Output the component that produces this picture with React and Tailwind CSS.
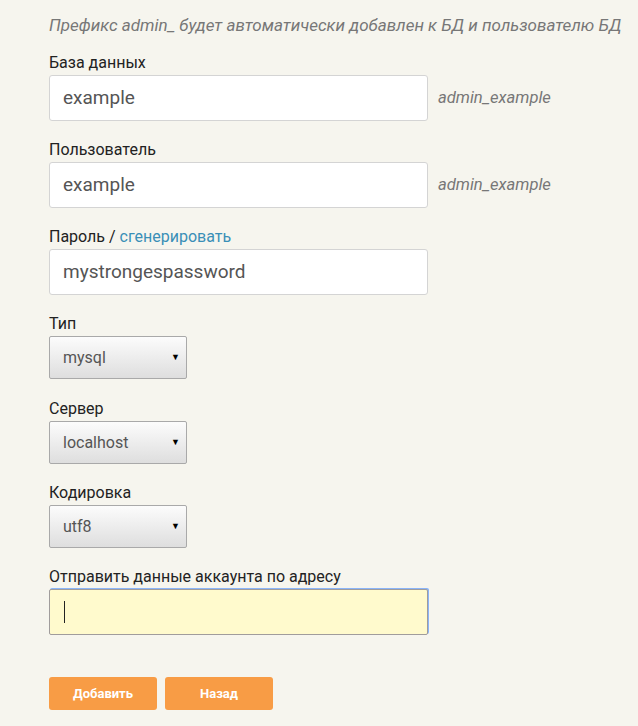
import React from "react";

function Label({ children }) {
  return <div className="text-[16px] leading-[20px] text-[#222] mb-[2px]">{children}</div>;
}

function TextInput({ value, hint }) {
  return (
    <div className="flex items-center">
      <div className="w-[379px] h-[46px] bg-white border border-[#d4d4d4] rounded-[3px] flex items-center pl-[13px] text-[19px] text-[#555]">
        {value}
      </div>
      {hint && <div className="ml-[10px] italic text-[16.6px] text-[#777]">{hint}</div>}
    </div>
  );
}

function Select({ value }) {
  return (
    <div className="w-[138px] h-[43px] border border-[#a9a9a9] rounded-[2px] bg-gradient-to-b from-[#fcfcfc] to-[#dedede] flex items-center justify-between pl-[13px] pr-[6px] text-[16px] text-[#555]">
      <span>{value}</span>
      <span className="text-[9px] text-black">▼</span>
    </div>
  );
}

export default function App() {
  return (
    <div
      className="w-[638px] h-[726px] bg-[#f6f5ee] pl-[49px] overflow-hidden"
      style={{ fontFamily: "Roboto, 'Noto Sans', sans-serif" }}
    >
      <div className="pt-[15px] italic text-[17px] leading-[20px] text-[#777] whitespace-nowrap">
        Префикс admin_ будет автоматически добавлен к БД и пользователю БД
      </div>

      <div className="mt-[18px]">
        <Label>База данных</Label>
        <TextInput value="example" hint="admin_example" />
      </div>

      <div className="mt-[19px]">
        <Label>Пользователь</Label>
        <TextInput value="example" hint="admin_example" />
      </div>

      <div className="mt-[19px]">
        <Label>
          Пароль / <span className="text-[#3a8fb7]">сгенерировать</span>
        </Label>
        <TextInput value="mystrongespassword" />
      </div>

      <div className="mt-[19px]">
        <Label>Тип</Label>
        <Select value="mysql" />
      </div>

      <div className="mt-[20px]">
        <Label>Сервер</Label>
        <Select value="localhost" />
      </div>

      <div className="mt-[19px]">
        <Label>Кодировка</Label>
        <Select value="utf8" />
      </div>

      <div className="mt-[19px]">
        <Label>Отправить данные аккаунта по адресу</Label>
        <div className="w-[379px] h-[46px] bg-[#fffacd] border border-[#a09c9c] rounded-[2px] shadow-[1px_-1px_0_#8ab4f8] flex items-center pl-[14px]">
          <div className="w-[1px] h-[22px] bg-[#222]" />
        </div>
      </div>

      <div className="mt-[42px] flex gap-[8px]">
        <button className="w-[108px] h-[33px] bg-[#f89c45] rounded-[3px] text-white font-bold text-[13px]">
          Добавить
        </button>
        <button className="w-[108px] h-[33px] bg-[#f89c45] rounded-[3px] text-white font-bold text-[13px]">
          Назад
        </button>
      </div>
    </div>
  );
}
